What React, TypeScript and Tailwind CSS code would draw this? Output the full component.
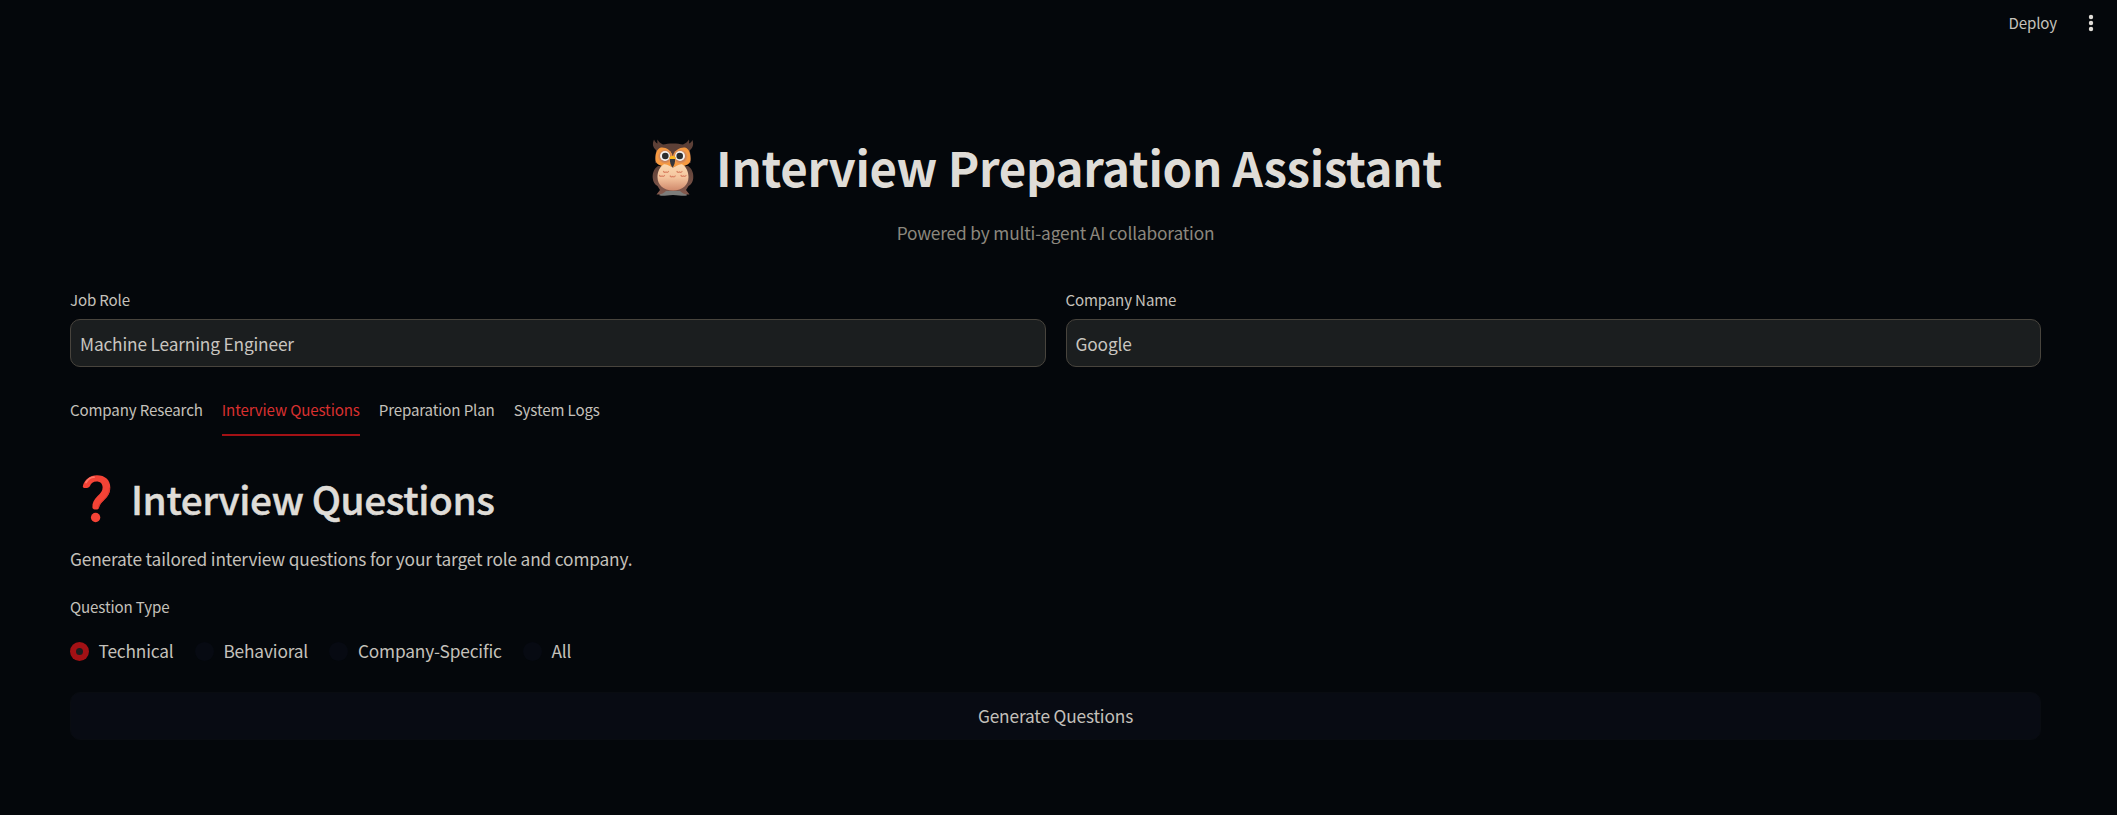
import React from "react";

const fields = [
  { label: "Job Role", value: "Machine Learning Engineer" },
  { label: "Company Name", value: "Google" },
];

const tabs = ["Company Research", "Interview Questions", "Preparation Plan", "System Logs"];

const questionTypes = ["Technical", "Behavioral", "Company-Specific", "All"];

function Owl() {
  return (
    <svg viewBox="0 0 42 58" className="h-[58px] w-[42px] shrink-0" aria-hidden="true">
      <defs>
        <linearGradient id="belly" x1="0" y1="0" x2="0" y2="1">
          <stop offset="0" stopColor="#fbd9b0" />
          <stop offset=".5" stopColor="#f4c49e" />
          <stop offset="1" stopColor="#d08a6c" />
        </linearGradient>
        <linearGradient id="wing" x1="0" y1="0" x2="0" y2="1">
          <stop offset="0" stopColor="#5d4037" />
          <stop offset="1" stopColor="#855a4e" />
        </linearGradient>
        <radialGradient id="eye">
          <stop offset=".6" stopColor="#c07a58" />
          <stop offset="1" stopColor="#f09a4c" />
        </radialGradient>
      </defs>
      <path d="M9 54C12 51.500 16 51 21 51s9 .5 12 3c1.500 1.500 3 2 1.500 2.500-3 1-8-.5-13.500-.5s-10 1.500-13 .5C6.500 56 8 55 9 54z" fill="#7d7d7b" />
      <path d="M6 27C1.500 30 .3 35 .8 39.500c.4 3.500 2 6 4.700 7.500L8 51l-3.500 4.500C9 56 12 54 14 52h14c2 2 5 4 9.500 3.500L34 51l2.500-4c2.700-1.500 4.300-4 4.700-7.500.5-4.500-.7-9.500-5.200-12.500z" fill="url(#wing)" />
      <path d="M2 .5C1 3 0 6 2.500 9.500 4 11 4.500 11.500 4 13c-1 4-1 8-.5 11L21 28l17.500-4c.5-3 .5-7-.5-11-.5-1.500 0-2 1.500-3.500C42 6 41 3 40.500 1c-1 2-2 3-3.500 3.500.3-1.500.3-2.500 0-4-1.200 2-3.500 4-6 5C26 4 16 4 11 5.500 8.500 4.500 6.500 2.500 5.500.5c-.3 1.500-.3 2.500 0 4C4 4 3 2.500 2 .5z" fill="#5d4037" />
      <path d="M21 18C19 11 14 8 9 8.500 5 9.500 3.500 14 3.500 20c0 4 3 6 6.500 7l11 1 11-1c3.500-1 6.500-3 6.500-7 0-6-1.500-10.500-5.500-11.500C28 8 23 11 21 18z" fill="#f6993f" />
      <path d="M21 28.500c-2.500-.5-6-4-9.500-3-3.500 2-6 7-6 12.500C5.500 46 11.500 51.500 21 51.500S36.500 46 36.500 38c0-5.500-2.500-10.500-6-12.500-3.500-1-7 2.500-9.500 3z" fill="url(#belly)" />
      <circle cx="13" cy="17.500" r="7.300" fill="url(#eye)" />
      <circle cx="28.500" cy="17.500" r="7.300" fill="url(#eye)" />
      <circle cx="13" cy="17" r="5" fill="#f4f1ee" />
      <circle cx="28" cy="17" r="5" fill="#f4f1ee" />
      <circle cx="13.300" cy="17" r="3.300" fill="#2b2d2f" />
      <circle cx="27.700" cy="17" r="3.300" fill="#2b2d2f" />
      <path d="M17.300 18.500c1-2 5.500-2 6.500 0 .3 1-1 2-3.200 2s-3.600-1-3.300-2z" fill="#fcb823" />
      <path d="M18 20h5c.3 3.500-.7 6.500-2.500 8.500C18.700 26.500 17.700 23.500 18 20z" fill="#34363b" />
      <g fill="none" stroke="#d98263" strokeWidth="1.200" strokeLinecap="round" strokeLinejoin="round">
        <path d="M11.500 32.500q1.300 1.600 2.500.3q1.300 1.300 2.500-.3M25 32.500q1.300 1.600 2.500.3q1.300 1.300 2.500-.3M7.500 36.500q1.300 1.600 2.500.3q1.300 1.300 2.500-.3M18.200 37q1.300 1.600 2.500.3q1.300 1.300 2.500-.3M29 36.500q1.300 1.600 2.500.3q1.300 1.300 2.500-.3" />
      </g>
    </svg>
  );
}

function QuestionMark() {
  return (
    <svg viewBox="0 0 29 48" className="h-[48px] w-[29px] shrink-0" aria-hidden="true">
      <path d="M.8 11.500C2 5 8 .3 15 .3 23 .3 28.300 5 28.300 12.500c0 7-4 10.500-7 13.500-2.500 2.500-4 4.500-4.200 6.500-.3 1.500-1.300 2-3.200 2s-3.300-.5-3.500-2c-.3-4.500 1.500-8 5.200-11.500 3-3 5-5 5-8.500 0-4-2.500-6-6-6-3.500 0-5.500 1.800-6.500 4.200C7.500 12.500 5.500 13 3.700 13 2 13 .8 12.500.8 11.500z" fill="#f44336" />
      <circle cx="13.600" cy="42.500" r="4.700" fill="#f44336" />
      <path d="M4 7.500C6 4 9 2.300 12 2.200" fill="none" stroke="#ff7568" strokeWidth="1.800" strokeLinecap="round" />
      <path d="M27.500 13c0 6-3 9-6 12-3 3-4.500 4.500-5 7.500" fill="none" stroke="#d8362c" strokeWidth="1" strokeLinecap="round" />
    </svg>
  );
}

export default function App() {
  return (
    <div className="flex h-[815px] w-full flex-col bg-[#04070b] font-['Noto_Sans_CJK_JP','Noto_Sans_CJK_SC',sans-serif] text-[17.300px] tracking-[-0.155px] text-[#c4c1bb]">
      <header className="flex h-[44px] shrink-0 items-center justify-end gap-[31px] pr-[23px]">
        <button className="text-[15.100px] leading-[24px] tracking-[-0.13px]">Deploy</button>
        <svg viewBox="0 0 6 18" className="mt-[2px] h-[18px] w-[6px]" fill="#e0ddd8" aria-label="Menu">
          <circle cx="3" cy="3" r="2.200" />
          <circle cx="3" cy="9" r="2.200" />
          <circle cx="3" cy="15" r="2.200" />
        </svg>
      </header>

      <main className="flex flex-col pl-[70px] pr-[76px]">
        <div className="mt-[89px] flex h-[70px] items-center justify-center pr-[17px]">
          <Owl />
          <h1 className="-mt-[2px] ml-[22px] whitespace-nowrap text-[47.400px] font-bold leading-[70px] tracking-[-0.31px] text-[#dfdcd7]">Interview Preparation Assistant</h1>
        </div>
        <p className="mt-[15px] text-center leading-[30px] text-[#8c877e]">Powered by multi-agent AI collaboration</p>

        <div className="mt-[39px] grid grid-cols-2 gap-[20px]">
          {fields.map((field) => (
            <label key={field.label} className="flex flex-col">
              <span className="text-[15.100px] leading-[25px] tracking-[-0.15px]">{field.label}</span>
              <input
                className="mt-[7px] h-[48px] rounded-[10px] border border-[#48443d] bg-[#1b1e1f] px-[9px] text-[17.300px] text-[#c9c6c0] outline-none"
                defaultValue={field.value}
              />
            </label>
          ))}
        </div>

        <nav className="mt-[19px] flex h-[50px] gap-[19px] text-[15.100px] tracking-[-0.13px]">
          {tabs.map((tab, i) => (
            <button
              key={tab}
              className={
                i === 1
                  ? "border-b-2 border-[#a31115] pb-[1px] text-[#d8302f]"
                  : "border-b-2 border-transparent pb-[1px]"
              }
            >
              {tab}
            </button>
          ))}
        </nav>

        <div className="mt-[33px] flex h-[60px] items-center pl-[12px]">
          <QuestionMark />
          <h2 className="-mt-[2px] ml-[20px] whitespace-nowrap text-[38.800px] font-medium leading-[60px] tracking-[-0.4px] text-[#dfdcd7] [-webkit-text-stroke:0.500px_#dfdcd7]">Interview Questions</h2>
        </div>
        <p className="mt-[15px] leading-[30px]">Generate tailored interview questions for your target role and company.</p>

        <div className="mt-[20px] text-[15.100px] leading-[25px] tracking-[-0.13px]">Question Type</div>
        <div className="mt-[17px] flex h-[30px] gap-[21.300px]">
          {questionTypes.map((type, i) => (
            <label key={type} className="flex items-center gap-[9.500px]">
              <span
                className={
                  i === 0
                    ? "flex size-[19px] items-center justify-center rounded-full bg-[#a31115]"
                    : "flex size-[19px] items-center justify-center rounded-full bg-[#070a12]"
                }
              >
                {i === 0 && <span className="size-[7px] rounded-full bg-[#1b1e1f]" />}
              </span>
              <span className="leading-[30px]">{type}</span>
            </label>
          ))}
        </div>

        <button className="mt-[26px] h-[48px] rounded-[10px] border border-[#090c11] bg-[#080b13] leading-[30px]">Generate Questions</button>
      </main>
    </div>
  );
}
